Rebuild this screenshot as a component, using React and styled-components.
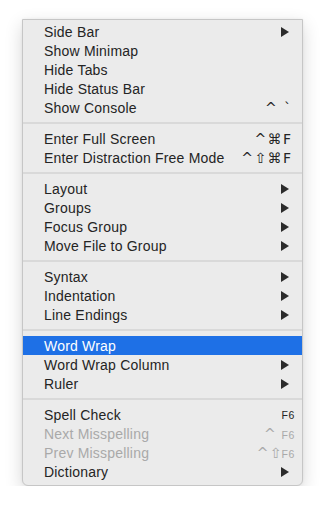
import React from "react";
import styled, { createGlobalStyle } from "styled-components";

const GlobalStyle = createGlobalStyle`
  html, body {
    margin: 0;
    padding: 0;
    background: #ffffff;
  }
`;

const groups = [
  [
    { label: "Side Bar", arrow: true },
    { label: "Show Minimap" },
    { label: "Hide Tabs" },
    { label: "Hide Status Bar" },
    { label: "Show Console", keys: [{ text: "^ `" }] },
  ],
  [
    { label: "Enter Full Screen", keys: [{ text: "^⌘F" }] },
    { label: "Enter Distraction Free Mode", keys: [{ text: "^⇧⌘F" }] },
  ],
  [
    { label: "Layout", arrow: true },
    { label: "Groups", arrow: true },
    { label: "Focus Group", arrow: true },
    { label: "Move File to Group", arrow: true },
  ],
  [
    { label: "Syntax", arrow: true },
    { label: "Indentation", arrow: true },
    { label: "Line Endings", arrow: true },
  ],
  [
    { label: "Word Wrap", active: true },
    { label: "Word Wrap Column", arrow: true },
    { label: "Ruler", arrow: true },
  ],
  [
    { label: "Spell Check", keys: [{ text: "F6", small: true }] },
    {
      label: "Next Misspelling",
      disabled: true,
      keys: [{ text: "^ " }, { text: "F6", small: true }],
    },
    {
      label: "Prev Misspelling",
      disabled: true,
      keys: [{ text: "^⇧" }, { text: "F6", small: true }],
    },
    { label: "Dictionary", arrow: true },
  ],
];

const Arrow = ({ color }) => (
  <ArrowIcon width="8" height="10" viewBox="0 0 8 10">
    <path d="M0 0 L8 5 L0 10 Z" fill={color} />
  </ArrowIcon>
);

const App = () => {
  return (
    <Page>
      <GlobalStyle />
      <Menu>
        {groups.map((group, gi) => (
          <React.Fragment key={gi}>
            {gi > 0 && <Separator />}
            {group.map((item) => {
              const endsSmall =
                item.keys && item.keys[item.keys.length - 1].small;
              return (
                <Item
                  key={item.label}
                  $active={item.active}
                  $disabled={item.disabled}
                >
                  <Label>{item.label}</Label>
                  {item.keys && (
                    <Shortcut $inset={!endsSmall}>
                      {item.keys.map((k, i) => (
                        <Key key={i} $small={k.small}>
                          {k.text}
                        </Key>
                      ))}
                    </Shortcut>
                  )}
                  {item.arrow && (
                    <Arrow color={item.active ? "#ffffff" : "#2b2b2b"} />
                  )}
                </Item>
              );
            })}
          </React.Fragment>
        ))}
      </Menu>
    </Page>
  );
};

const Page = styled.div`
  padding: 19px 0 0 22px;
  font-family: "Liberation Sans", Arial, sans-serif;
`;

const Menu = styled.div`
  width: 279px;
  padding: 2px 0 4px;
  background: #ebebeb;
  border: 1px solid #c6c6c6;
  border-radius: 0 0 6px 6px;
  box-shadow: 0 6px 18px rgba(0, 0, 0, 0.16), 0 0 3px rgba(0, 0, 0, 0.06);
`;

const Separator = styled.div`
  height: 2px;
  margin: 5px 0 5px;
  background: #d9d9d9;
`;

const Item = styled.div`
  display: flex;
  align-items: center;
  height: 19px;
  padding: 0 7px 0 21px;
  font-size: 14px;
  letter-spacing: 0.2px;
  color: ${(p) =>
    p.$active ? "#ffffff" : p.$disabled ? "#a9a9a9" : "#242424"};
  background: ${(p) => (p.$active ? "#1e70e6" : "transparent")};
`;

const Label = styled.span`
  flex: 1;
  white-space: nowrap;
`;

const Shortcut = styled.span`
  display: flex;
  align-items: baseline;
  margin-right: ${(p) => (p.$inset ? "4px" : "0")};
  font-family: "DejaVu Sans", "Liberation Sans", sans-serif;
  letter-spacing: 1.4px;
  white-space: pre;
`;

const Key = styled.span`
  font-size: ${(p) => (p.$small ? "10.5px" : "14px")};
  letter-spacing: ${(p) => (p.$small ? "0.6px" : "inherit")};
  font-family: ${(p) =>
    p.$small ? '"Liberation Sans", Arial, sans-serif' : "inherit"};
  margin-right: ${(p) => (p.$small ? "0" : "-1.4px")};
`;

const ArrowIcon = styled.svg`
  display: block;
  margin-right: 6px;
`;

export default App;
